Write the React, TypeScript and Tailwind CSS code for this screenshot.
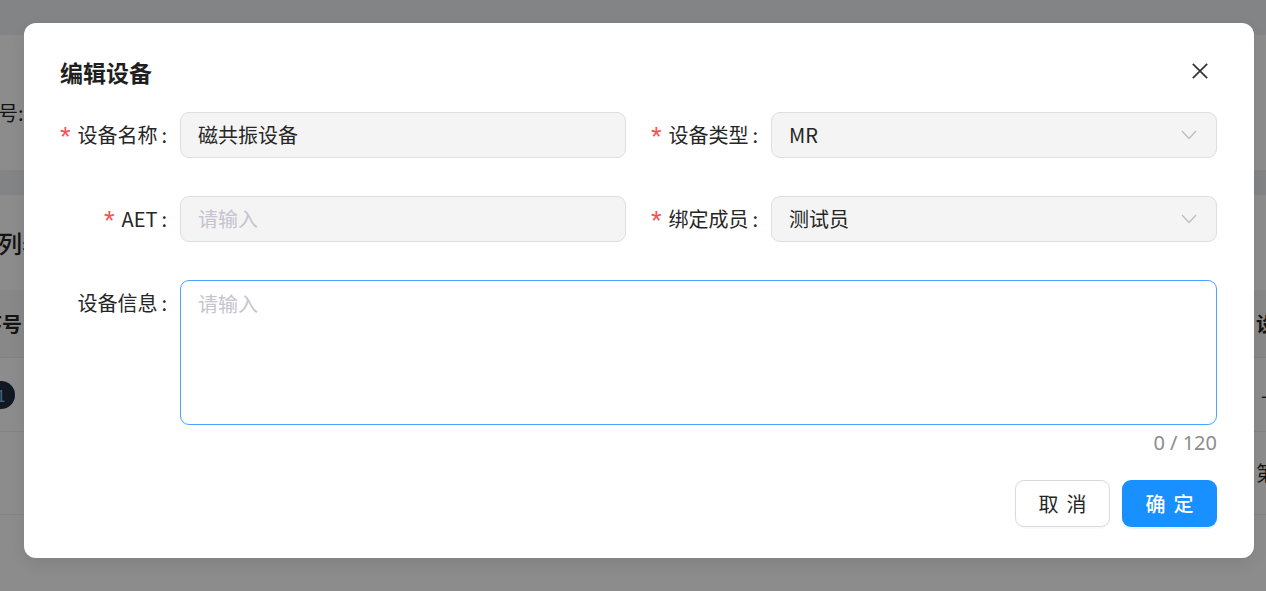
const cjk = "font-['Noto_Sans_CJK_SC','Noto_Sans',sans-serif]";

function Required() {
  return (
    <span className="mr-[4px] inline-block translate-y-[5px] font-['Liberation_Mono',monospace] text-[27px] leading-none text-[#ff4d4f]">
      *
    </span>
  );
}

function Label({ text, required }: { text: string; required?: boolean }) {
  return (
    <div className="flex h-[46px] w-[120px] shrink-0 items-center justify-end whitespace-nowrap pr-[13px] text-[20px] text-[#262626]">
      {required ? <Required /> : null}
      <span>{text}</span>
      <span className="ml-[4px]">:</span>
    </div>
  );
}

function TextField({ value, placeholder }: { value?: string; placeholder?: string }) {
  return (
    <div className="flex h-[46px] min-w-0 flex-1 items-center rounded-[9px] border border-[#dedede] bg-[#f4f4f4] px-[17px] text-[20px]">
      {value ? (
        <span className="text-[#262626]">{value}</span>
      ) : (
        <span className="text-[#c7c3cf]">{placeholder}</span>
      )}
    </div>
  );
}

function SelectField({ value }: { value: string }) {
  return (
    <div className="flex h-[46px] min-w-0 flex-1 items-center justify-between rounded-[9px] border border-[#dedede] bg-[#f4f4f4] pl-[17px] pr-[19px] text-[20px] text-[#262626]">
      <span>{value}</span>
      <svg width="16" height="10" viewBox="0 0 16 10" fill="none">
        <polyline points="1,1 8,8.5 15,1" stroke="#bdbdbd" strokeWidth="1.3" />
      </svg>
    </div>
  );
}

function BackgroundPage() {
  return (
    <div className="flex h-full flex-col gap-[25px] pt-[35px] text-[20px] text-[#262626]">
      <div className="flex h-[135px] shrink-0 items-center bg-white pt-[21px]">
        <span className="-ml-[22px]">型号:</span>
      </div>
      <div className="flex flex-1 flex-col bg-white">
        <div className="flex h-[95px] shrink-0 items-center">
          <span className="-ml-[2px] text-[24px] font-medium">列表</span>
        </div>
        <div className="flex h-[68px] shrink-0 items-center justify-between border-b border-[#eeeeee] bg-[#f7f8fa] font-bold">
          <span className="-ml-[18px]">序号</span>
          <span className="-mr-[30px]">设备</span>
        </div>
        <div className="flex h-[74px] shrink-0 items-center justify-between border-b border-[#eeeeee]">
          <span className="-ml-[13px] flex h-[28px] w-[28px] items-center justify-center rounded-full bg-[#1f2d3d] text-[16px] text-[#7fb8e8]">
            1
          </span>
          <span className="-mr-[2px]">-</span>
        </div>
        <div className="flex h-[83px] shrink-0 items-center justify-end border-b border-[#eeeeee]">
          <span className="-mr-[30px]">第一</span>
        </div>
      </div>
    </div>
  );
}

export default function App() {
  return (
    <div className={`relative h-[591px] w-[1266px] overflow-hidden bg-[#eef0f3] ${cjk}`}>
      <BackgroundPage />
      <div className="absolute inset-0 bg-black/45 pl-[24px] pt-[23px]">
        <div className="flex h-[535px] w-[1230px] flex-col rounded-[12px] bg-white pl-[36px] pr-[37px] pt-[32px] shadow-[0_6px_16px_rgba(0,0,0,0.08)]">
          <div className="flex h-[34px] items-center justify-between">
            <h2 className="text-[23px] font-bold text-[#1f1f1f]">编辑设备</h2>
            <button className="-mt-[2px] flex h-[34px] w-[34px] items-center justify-center">
              <svg width="16" height="16" viewBox="0 0 16 16" fill="none">
                <path d="M0.8 0.8 L15.2 15.2 M15.2 0.8 L0.8 15.2" stroke="#333333" strokeWidth="1.7" />
              </svg>
            </button>
          </div>

          <div className="mt-[23px] flex gap-[25px]">
            <div className="flex flex-1">
              <Label text="设备名称" required />
              <TextField value="磁共振设备" />
            </div>
            <div className="flex flex-1">
              <Label text="设备类型" required />
              <SelectField value="MR" />
            </div>
          </div>

          <div className="mt-[38px] flex gap-[25px]">
            <div className="flex flex-1">
              <Label text="AET" required />
              <TextField placeholder="请输入" />
            </div>
            <div className="flex flex-1">
              <Label text="绑定成员" required />
              <SelectField value="测试员" />
            </div>
          </div>

          <div className="mt-[38px] flex">
            <Label text="设备信息" />
            <div className="flex flex-1 flex-col">
              <div className="h-[145px] rounded-[9px] border border-[#4aa3ff] bg-white px-[17px] py-[9px] text-[20px] leading-[28px] text-[#c7c3cf]">
                请输入
              </div>
              <div className="mt-[4px] h-[28px] text-right font-['Noto_Sans',sans-serif] text-[20px] leading-[28px] text-[#8c8c8c]">
                0 / 120
              </div>
            </div>
          </div>

          <div className="mt-[23px] flex justify-end gap-[12px]">
            <button className="h-[47px] w-[95px] rounded-[9px] border border-[#d9d9d9] bg-white text-[20px] tracking-[0.4em] text-[#262626] shadow-[0_2px_0_rgba(0,0,0,0.02)]">
              <span className="-mr-[0.4em]">取消</span>
            </button>
            <button className="h-[47px] w-[95px] rounded-[9px] bg-[#1890ff] text-[20px] font-medium tracking-[0.4em] text-white shadow-[0_2px_0_rgba(5,145,255,0.1)]">
              <span className="-mr-[0.4em]">确定</span>
            </button>
          </div>
        </div>
      </div>
    </div>
  );
}
